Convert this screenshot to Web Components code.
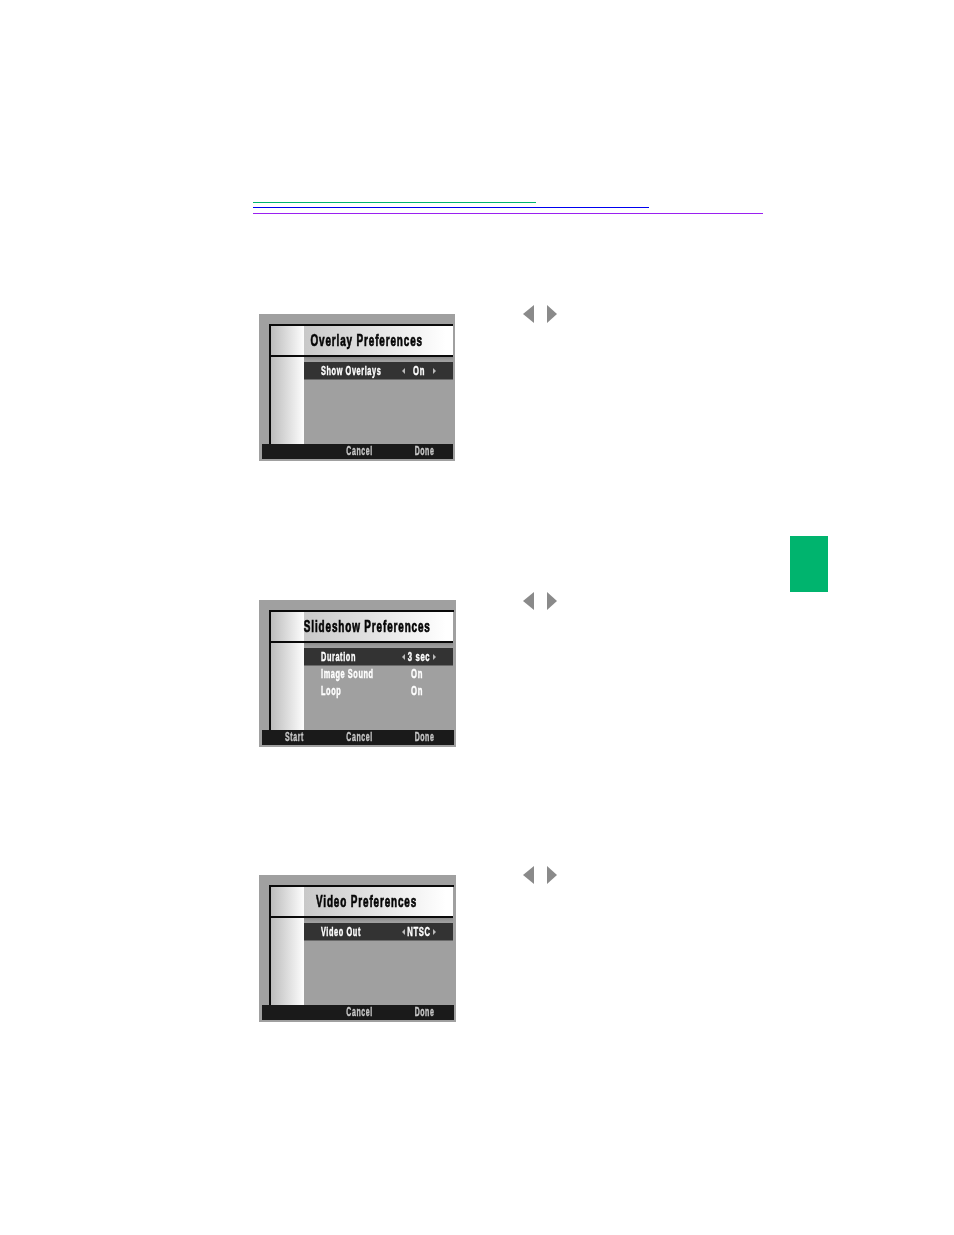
<!DOCTYPE html>
<html>
<head>
<meta charset="utf-8">
<title>Preferences</title>
<style>
  html, body { margin: 0; background: #fff; }
</style>
</head>
<body>
<manual-page>
  <pref-section>
    <pref-screen heading="Overlay Preferences">
      <pref-row label="Show Overlays" value="On" selected></pref-row>
    </pref-screen>
  </pref-section>
  <pref-section style="margin-top:131px;--nav-top:0px">
    <pref-screen heading="Slideshow Preferences" start style="width:197px">
      <pref-row label="Duration" value="3 sec" selected></pref-row>
      <pref-row label="Image Sound" value="On"></pref-row>
      <pref-row label="Loop" value="On"></pref-row>
    </pref-screen>
  </pref-section>
  <pref-section style="margin-top:120px">
    <pref-screen heading="Video Preferences" style="width:197px">
      <pref-row label="Video Out" value="NTSC" selected></pref-row>
    </pref-screen>
  </pref-section>
</manual-page>

<script>
class ManualPage extends HTMLElement {
  constructor() {
    super();
    this.attachShadow({ mode: "open" });
    this.shadowRoot.innerHTML = `
      <style>
        :host {
          display: grid;
          grid-template-columns: 510px 38px;
          column-gap: 27px;
          align-items: start;
          box-sizing: border-box;
          height: 1235px;
          padding: 202px 0 0 253px;
          background: #fff;
          font-family: "Liberation Sans", sans-serif;
        }
        .rules { display: flex; flex-direction: column; margin-bottom: 92px; }
        .rules i { display: block; height: 1px; }
        .green { width: 283px; background: #00b46e; }
        .blue { width: 396px; background: #0000f0; margin-top: 4px; }
        .purple { width: 510px; background: #9a20f0; margin-top: 5px; }
        .tab { width: 38px; height: 56px; margin-top: 334px; background: #00b46e; }
      </style>
      <div class="main">
        <div class="rules"><i class="green"></i><i class="blue"></i><i class="purple"></i></div>
        <slot></slot>
      </div>
      <div class="tab"></div>
    `;
  }
}

class PrefSection extends HTMLElement {
  constructor() {
    super();
    this.attachShadow({ mode: "open" });
    this.shadowRoot.innerHTML = `
      <style>
        :host { display: flex; align-items: flex-start; padding-left: 6px; }
        .shot { margin-top: 8px; width: 196px; }
        .nav { display: flex; gap: 13px; margin: var(--nav-top, -1px) 0 0 68px; filter: blur(.3px); }
        svg { display: block; }
      </style>
      <div class="shot"><slot></slot></div>
      <div class="nav">
        <svg width="11" height="18" viewBox="0 0 11 18"><polygon points="11,0 11,18 0,9" fill="#8a8a8a"/></svg>
        <svg width="10" height="18" viewBox="0 0 10 18"><polygon points="0,0 0,18 10,9" fill="#8a8a8a"/></svg>
      </div>
    `;
  }
}

class PrefScreen extends HTMLElement {
  constructor() {
    super();
    this.attachShadow({ mode: "open" });
    this.shadowRoot.innerHTML = `
      <style>
        :host {
          display: flex;
          flex-direction: column;
          box-sizing: border-box;
          width: 196px;
          height: 147px;
          padding: 10px 2px 2px;
          background: #a0a0a0;
          filter: blur(.45px);
        }
        .frame {
          flex: 1;
          margin-left: 8px;
          display: grid;
          grid-template-columns: 33px 149px;
          grid-template-rows: 31px 1fr;
          border-top: 2px solid #0a0a0a;
          border-left: 2px solid #0a0a0a;
          min-height: 0;
        }
        .side { background: linear-gradient(90deg, #bcbcbc, #fdfdfd); }
        .side.top { border-bottom: 2px solid #0a0a0a; }
        .title {
          display: flex;
          align-items: center;
          justify-content: center;
          padding-right: 23px;
          border-bottom: 2px solid #0a0a0a;
          background: linear-gradient(90deg, #c8c8c8, #fff 95%);
          color: #050505;
          font-size: 16px;
          font-weight: bold;
          letter-spacing: 1.4px;
          white-space: nowrap;
          -webkit-text-stroke: .7px #050505;
        }
        .title span { display: inline-block; transform: scaleX(.62); }
        .rows {
          display: flex;
          flex-direction: column;
          padding-top: 5px;
          background: linear-gradient(#8c8c8c, #a0a0a0 4px);
        }
        .bar {
          display: grid;
          grid-template-columns: repeat(3, 65px);
          height: 15px;
          margin-left: 1px;
          background: #1a1a1a;
          color: #c8c8c8;
          font-size: 12px;
          font-weight: bold;
          line-height: 15px;
          letter-spacing: 1px;
          text-align: center;
          overflow: hidden;
          -webkit-text-stroke: .35px #c8c8c8;
        }
        .bar span { display: inline-block; transform: scaleX(.58); }
      </style>
      <div class="frame">
        <div class="side top"></div>
        <div class="title"><span></span></div>
        <div class="side"></div>
        <div class="rows"><slot></slot></div>
      </div>
      <div class="bar"><span class="start"></span><span>Cancel</span><span>Done</span></div>
    `;
  }
  connectedCallback() {
    this.shadowRoot.querySelector(".title span").textContent = this.getAttribute("heading");
    if (this.hasAttribute("start")) {
      this.shadowRoot.querySelector(".start").textContent = "Start";
    }
  }
}

class PrefRow extends HTMLElement {
  constructor() {
    super();
    this.attachShadow({ mode: "open" });
    this.shadowRoot.innerHTML = `
      <style>
        :host {
          display: grid;
          grid-template-columns: 82px 34px;
          align-items: center;
          height: 17px;
          padding-left: 16px;
          color: #fff;
          font-size: 12px;
          font-weight: bold;
          letter-spacing: 1px;
          white-space: nowrap;
          -webkit-text-stroke: .4px #fff;
        }
        :host([selected]) { background: #333; box-shadow: 0 1px 0 #6a6a6a; }
        .lab { display: block; transform: scaleX(.61); transform-origin: 0 50%; margin-left: .5px; }
        .val { display: grid; grid-template-columns: 3px minmax(0, 1fr) 3px; align-items: center; }
        svg { visibility: hidden; }
        :host([selected]) svg { visibility: visible; }
        b { display: flex; justify-content: center; font-weight: bold; transform: scaleX(.64); margin-right: 4px; }
        :host([selected]) b { margin-right: 0; }
      </style>
      <span class="lab"></span>
      <span class="val">
        <svg width="3" height="6" viewBox="0 0 3 6"><polygon points="3,0 3,6 0,3" fill="#bbb"/></svg>
        <b></b>
        <svg width="3" height="6" viewBox="0 0 3 6"><polygon points="0,0 0,6 3,3" fill="#bbb"/></svg>
      </span>
    `;
  }
  connectedCallback() {
    this.shadowRoot.querySelector(".lab").textContent = this.getAttribute("label");
    this.shadowRoot.querySelector("b").textContent = this.getAttribute("value");
  }
}

customElements.define("manual-page", ManualPage);
customElements.define("pref-section", PrefSection);
customElements.define("pref-screen", PrefScreen);
customElements.define("pref-row", PrefRow);
</script>
</body>
</html>
